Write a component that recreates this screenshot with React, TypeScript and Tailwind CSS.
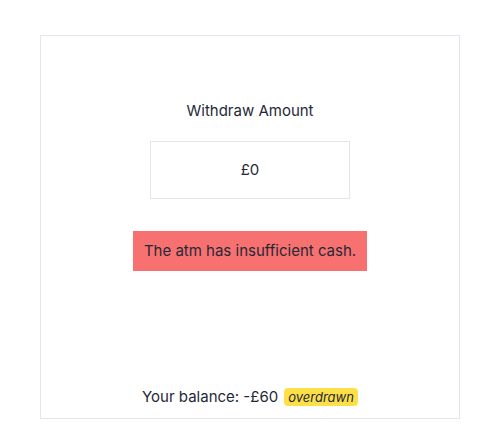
import React from 'react';

const App: React.FC = () => {
  return (
    <div
      className="w-[504px] h-[445px] bg-white pt-[35px] pl-[40px] text-[#1f2937]"
      style={{ fontFamily: 'Inter, "Noto Sans", sans-serif' }}
    >
      <div className="w-[420px] h-[384px] border border-[#e2e6ee] flex flex-col items-center">
        <label className="mt-[65px] text-[15px] leading-5">Withdraw Amount</label>
        <div className="mt-[20px] w-[200px] h-[58px] border border-[#e2e6ee] flex items-center justify-center text-[15px]">
          £0
        </div>
        <div className="mt-[32px] w-[234px] h-[40px] bg-[#f87171] flex items-center justify-center text-[15px]">
          The atm has insufficient cash.
        </div>
        <div className="mt-auto mb-[10px] flex items-center gap-[6px] text-[15px]">
          <span>Your balance: -£60</span>
          <span className="bg-[#fde047] rounded px-[4px] text-[13px] italic leading-[18px]">overdrawn</span>
        </div>
      </div>
    </div>
  );
};

export default App;
